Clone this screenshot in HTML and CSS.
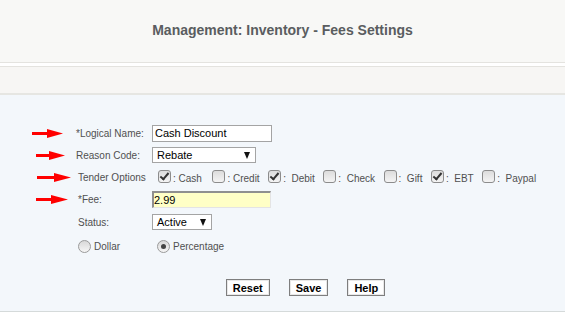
FILE: index.html
```html
<!DOCTYPE html>
<html lang="en">
<head>
  <meta charset="UTF-8">
  <title>Management: Inventory - Fees Settings</title>
  <link rel="stylesheet" href="styles.css">
</head>
<body>

<div class="header">
  <h1>Management: Inventory - Fees Settings</h1>
</div>
<div class="band"></div>

<div class="form">
  <div class="grid">
    <div class="arrow a1"><svg width="31" height="9" viewBox="0 0 31 9"><rect x="0" y="3" width="17" height="3" fill="#f00"/><polygon points="15,0 31,4.5 15,9" fill="#f00"/></svg></div>
    <label class="lbl" for="name">*Logical Name:</label>
    <div class="field"><input id="name" class="text" type="text" value="Cash Discount"></div>

    <div class="arrow a2"><svg width="29" height="9" viewBox="0 0 29 9"><rect x="0" y="3" width="15" height="3" fill="#f00"/><polygon points="13,0 29,4.5 13,9" fill="#f00"/></svg></div>
    <label class="lbl">Reason Code:</label>
    <div class="field"><div class="select wide"><span>Rebate</span><i class="caret"></i></div></div>

    <div class="arrow a3"><svg width="34" height="9" viewBox="0 0 34 9"><rect x="0" y="3" width="19" height="3" fill="#f00"/><polygon points="17,0 34,4.5 17,9" fill="#f00"/></svg></div>
    <label class="lbl shift">Tender Options</label>
    <div class="field tenders">
      <span class="opt first"><span class="cb on"></span>: Cash</span>
      <span class="opt"><span class="cb"></span>: Credit</span>
      <span class="opt"><span class="cb on"></span>:&nbsp; Debit</span>
      <span class="opt"><span class="cb"></span>:&nbsp; Check</span>
      <span class="opt"><span class="cb"></span>:&nbsp; Gift</span>
      <span class="opt"><span class="cb on"></span>:&nbsp; EBT</span>
      <span class="opt"><span class="cb"></span>:&nbsp; Paypal</span>
    </div>

    <div class="arrow a4"><svg width="32" height="9" viewBox="0 0 32 9"><rect x="0" y="3" width="17" height="3" fill="#f00"/><polygon points="15,0 32,4.5 15,9" fill="#f00"/></svg></div>
    <label class="lbl shift" for="fee">*Fee:</label>
    <div class="field"><input id="fee" class="text fee" type="text" value="2.99"></div>

    <div class="arrow"></div>
    <label class="lbl shift">Status:</label>
    <div class="field"><div class="select short"><span>Active</span><i class="caret"></i></div></div>

    <div class="arrow"></div>
    <div class="lbl shift"><span class="radio"></span>Dollar</div>
    <div class="field radios"><span class="radio on"></span>Percentage</div>
  </div>

  <div class="buttons">
    <button class="btn">Reset</button>
    <button class="btn">Save</button>
    <button class="btn">Help</button>
  </div>
</div>

</body>
</html>
```

FILE: styles.css
```css
body {
  margin: 0;
  font-family: "Liberation Sans", Arial, sans-serif;
  background: #fff;
}
.header {
  height: 62px;
  background: #f8f8f6;
  border-bottom: 1px solid #e4e3df;
  display: flex;
  align-items: center;
  justify-content: center;
}
h1 {
  margin: 0 0 2px;
  font-size: 14px;
  font-weight: bold;
  color: #5a5d60;
}
.band {
  height: 26px;
  margin-top: 3px;
  background: #f7f6f4;
  border-top: 1px solid #e4e3df;
  border-bottom: 2px solid #e6e6e2;
}
.form {
  background: #f3f7fb;
  height: 217px;
  padding-top: 27px;
  box-sizing: border-box;
  border-bottom: 1px solid #d5dada;
}
.grid {
  display: grid;
  grid-template-columns: 76px 76px 1fr;
  grid-template-rows: 22px 22px 22px 23px 22px 26px;
  align-items: center;
}
.arrow {
  display: flex;
  align-items: center;
}
.arrow svg { display: block; }
.a1 { margin-left: 32px; }
.a2 { margin-left: 36px; }
.a3 { margin-left: 37px; }
.a4 { margin-left: 36px; }
.lbl {
  font-size: 10px;
  color: #505050;
  display: flex;
  align-items: center;
}
.lbl.shift { padding-left: 2px; }
.field {
  display: flex;
  align-items: center;
  font-size: 10px;
  color: #505050;
}
input.text {
  width: 120px;
  height: 17px;
  box-sizing: border-box;
  margin: 0;
  padding: 0 2px;
  font-family: "Liberation Sans", Arial, sans-serif;
  font-size: 11px;
  color: #000;
  border: 1px solid #a4a4a4;
  background: #fff;
  outline: none;
}
input.fee {
  width: 119px;
  padding: 0;
  background: #ffffc6;
  border-top: 2px solid #8f8f8f;
  border-left: 2px solid #8f8f8f;
  border-right: 1px solid #e4e4e4;
  border-bottom: 1px solid #e4e4e4;
}
.select {
  height: 16px;
  box-sizing: border-box;
  border: 1px solid #a4a4a4;
  background: #fff;
  display: flex;
  align-items: center;
  justify-content: space-between;
  padding: 0 5px 0 4px;
  font-size: 11px;
  color: #000;
}
.select.wide { width: 104px; }
.select.short { width: 60px; }
.caret {
  width: 0;
  height: 0;
  border-left: 3.5px solid transparent;
  border-right: 3.5px solid transparent;
  border-top: 7px solid #111;
}
.tenders {
  padding-left: 6px;
  gap: 8.5px;
}
.opt {
  display: flex;
  align-items: center;
  gap: 2px;
  padding-top: 3px;
}
.opt.first { margin-right: 2px; }
.cb {
  width: 13px;
  height: 13px;
  box-sizing: border-box;
  border: 1px solid #8c8c8c;
  border-radius: 3px;
  background: linear-gradient(#dcdcdc, #f4f4f4);
  margin-top: -4px;
  position: relative;
}
.cb.on::after {
  content: "";
  position: absolute;
  left: 3px;
  top: 0px;
  width: 3px;
  height: 7px;
  border-right: 2px solid #333;
  border-bottom: 2px solid #333;
  transform: rotate(40deg);
}
.radio {
  width: 13px;
  height: 13px;
  box-sizing: border-box;
  border-radius: 50%;
  border: 1px solid #9a9a9a;
  background: linear-gradient(#d8d8d8, #f6f6f6);
  margin-right: 3px;
  position: relative;
}
.radio.on::after {
  content: "";
  position: absolute;
  left: 3px;
  top: 3px;
  width: 5px;
  height: 5px;
  border-radius: 50%;
  background: #444;
}
.radios { padding-left: 5px; }
.buttons {
  display: flex;
  justify-content: center;
  gap: 19px;
  margin-top: 20px;
  padding-left: 46px;
}
.btn {
  height: 17px;
  padding: 0 6px;
  box-sizing: border-box;
  margin: 0;
  font-family: "Liberation Sans", Arial, sans-serif;
  font-size: 11px;
  font-weight: bold;
  color: #000;
  background: #fff;
  border: 1px solid #7e7e7e;
  box-shadow: inset 0 0 0 1px #e8e8e8;
}
```
